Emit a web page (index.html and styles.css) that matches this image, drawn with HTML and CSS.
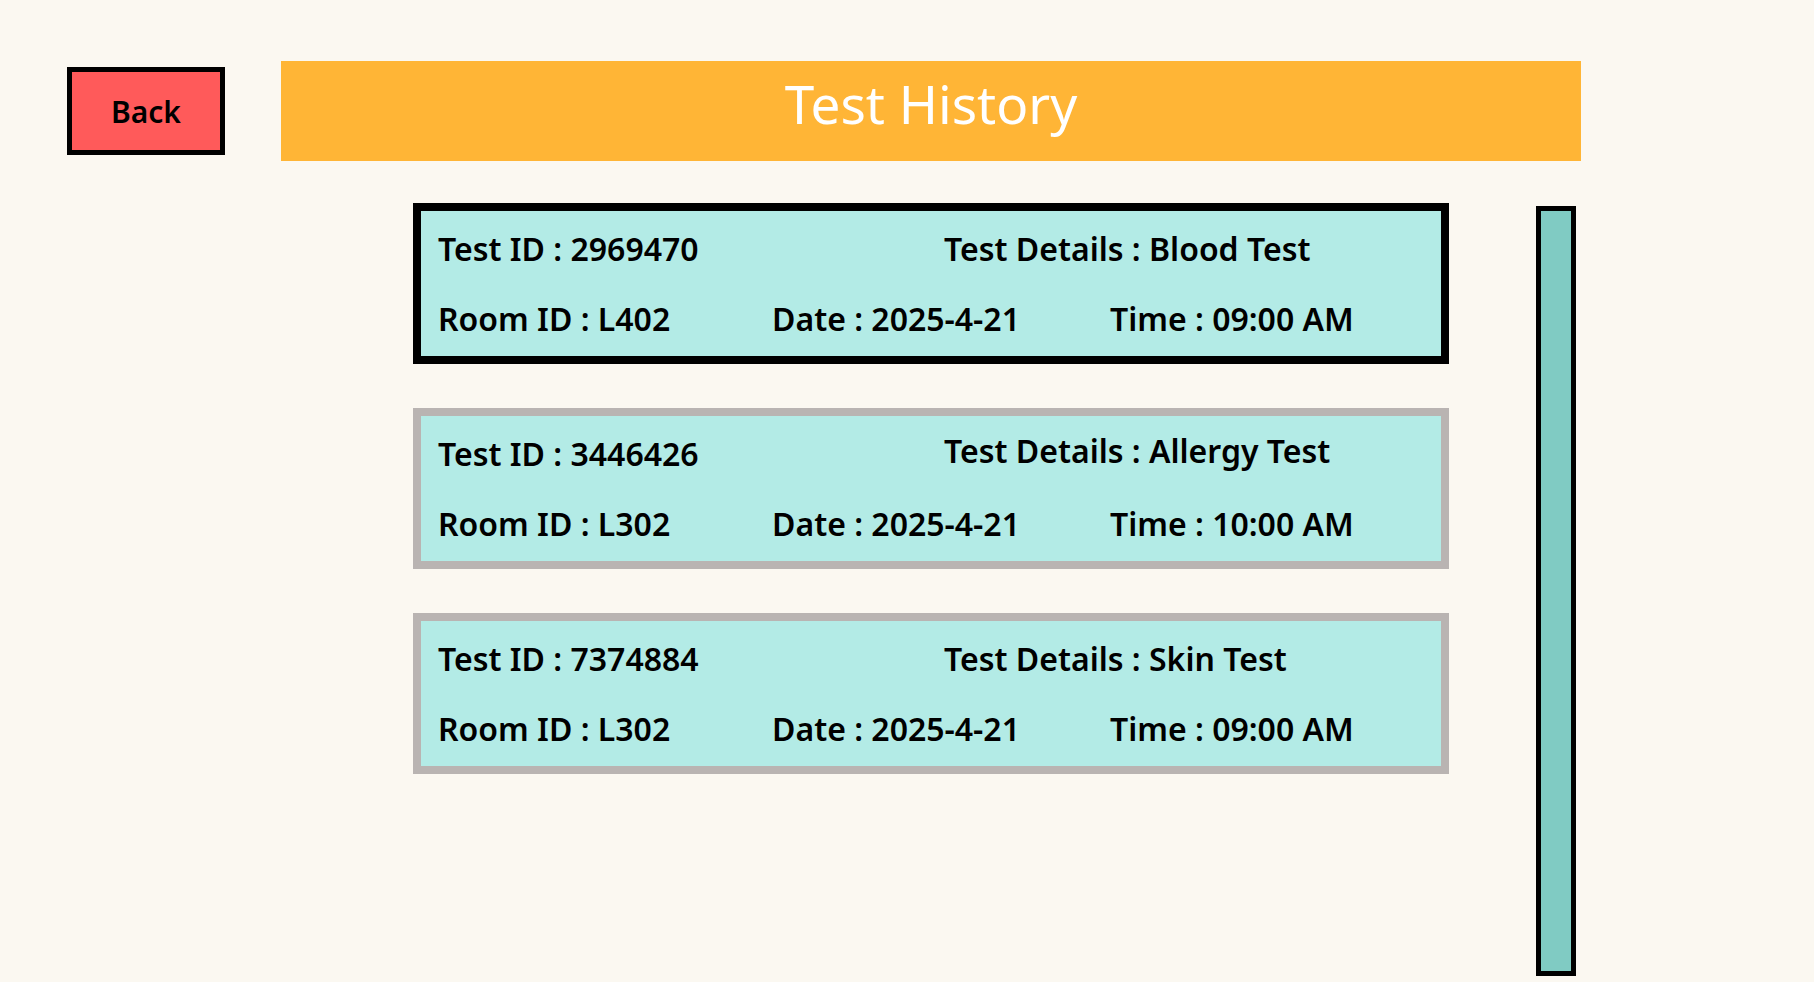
FILE: index.html
```html
<!DOCTYPE html>
<html lang="en">
<head>
<meta charset="utf-8">
<title>Test History</title>
<link rel="stylesheet" href="styles.css">
</head>
<body>
<div class="page">
  <div class="top">
    <button class="back">Back</button>
    <div class="header">Test History</div>
  </div>
  <div class="main">
    <div class="cards">
      <div class="card selected">
        <div class="row">
          <span class="cell cell-id">Test ID : 2969470</span>
          <span class="cell">Test Details : Blood Test</span>
        </div>
        <div class="row">
          <span class="cell cell-room">Room ID : L402</span>
          <span class="cell cell-date">Date : 2025-4-21</span>
          <span class="cell">Time : 09:00 AM</span>
        </div>
      </div>
      <div class="card">
        <div class="row">
          <span class="cell cell-id">Test ID : 3446426</span>
          <span class="cell raised">Test Details : Allergy Test</span>
        </div>
        <div class="row">
          <span class="cell cell-room">Room ID : L302</span>
          <span class="cell cell-date">Date : 2025-4-21</span>
          <span class="cell">Time : 10:00 AM</span>
        </div>
      </div>
      <div class="card">
        <div class="row">
          <span class="cell cell-id">Test ID : 7374884</span>
          <span class="cell">Test Details : Skin Test</span>
        </div>
        <div class="row">
          <span class="cell cell-room">Room ID : L302</span>
          <span class="cell cell-date">Date : 2025-4-21</span>
          <span class="cell">Time : 09:00 AM</span>
        </div>
      </div>
    </div>
    <div class="scrollbar"></div>
  </div>
</div>
</body>
</html>
```
FILE: styles.css
```css
html, body {
  margin: 0;
  padding: 0;
  background: #fbf8f1;
  font-family: "Noto Sans", "Open Sans", sans-serif;
  color: #000;
}

.page {
  padding: 61px 0 0 67px;
  height: 982px;
  box-sizing: border-box;
  overflow: hidden;
}

.top {
  display: flex;
  align-items: flex-start;
  gap: 56px;
}

.back {
  margin-top: 6px;
  width: 158px;
  height: 88px;
  box-sizing: border-box;
  border: 5px solid #000;
  background: #ff5a5a;
  font-family: "Noto Sans", sans-serif;
  font-size: 30px;
  font-weight: 600;
  color: #000;
  padding: 0;
}

.header {
  width: 1300px;
  height: 100px;
  box-sizing: border-box;
  padding-bottom: 15px;
  background: #ffb536;
  color: #fff;
  font-size: 53px;
  line-height: 85px;
  text-align: center;
}

.main {
  display: flex;
  align-items: flex-start;
  margin-top: 42px;
  padding-left: 346px;
  gap: 87px;
}

.cards {
  display: flex;
  flex-direction: column;
  gap: 44px;
  width: 1036px;
}

.card {
  background: #b3ebe6;
  border: 8px solid #b9b4b2;
  padding: 18px 17px 17px;
  display: flex;
  flex-direction: column;
  gap: 30px;
}

.card.selected {
  border-color: #000;
}

.row {
  display: flex;
  font-size: 32px;
  font-weight: 600;
  line-height: 40px;
  white-space: nowrap;
}

.cell-id { width: 506px; }
.cell-room { width: 334px; }
.cell-date { width: 338px; }
.raised { margin-top: -3px; }

.scrollbar {
  margin-top: 3px;
  width: 40px;
  height: 770px;
  box-sizing: border-box;
  border: 5px solid #000;
  background: #80cbc3;
}
```
